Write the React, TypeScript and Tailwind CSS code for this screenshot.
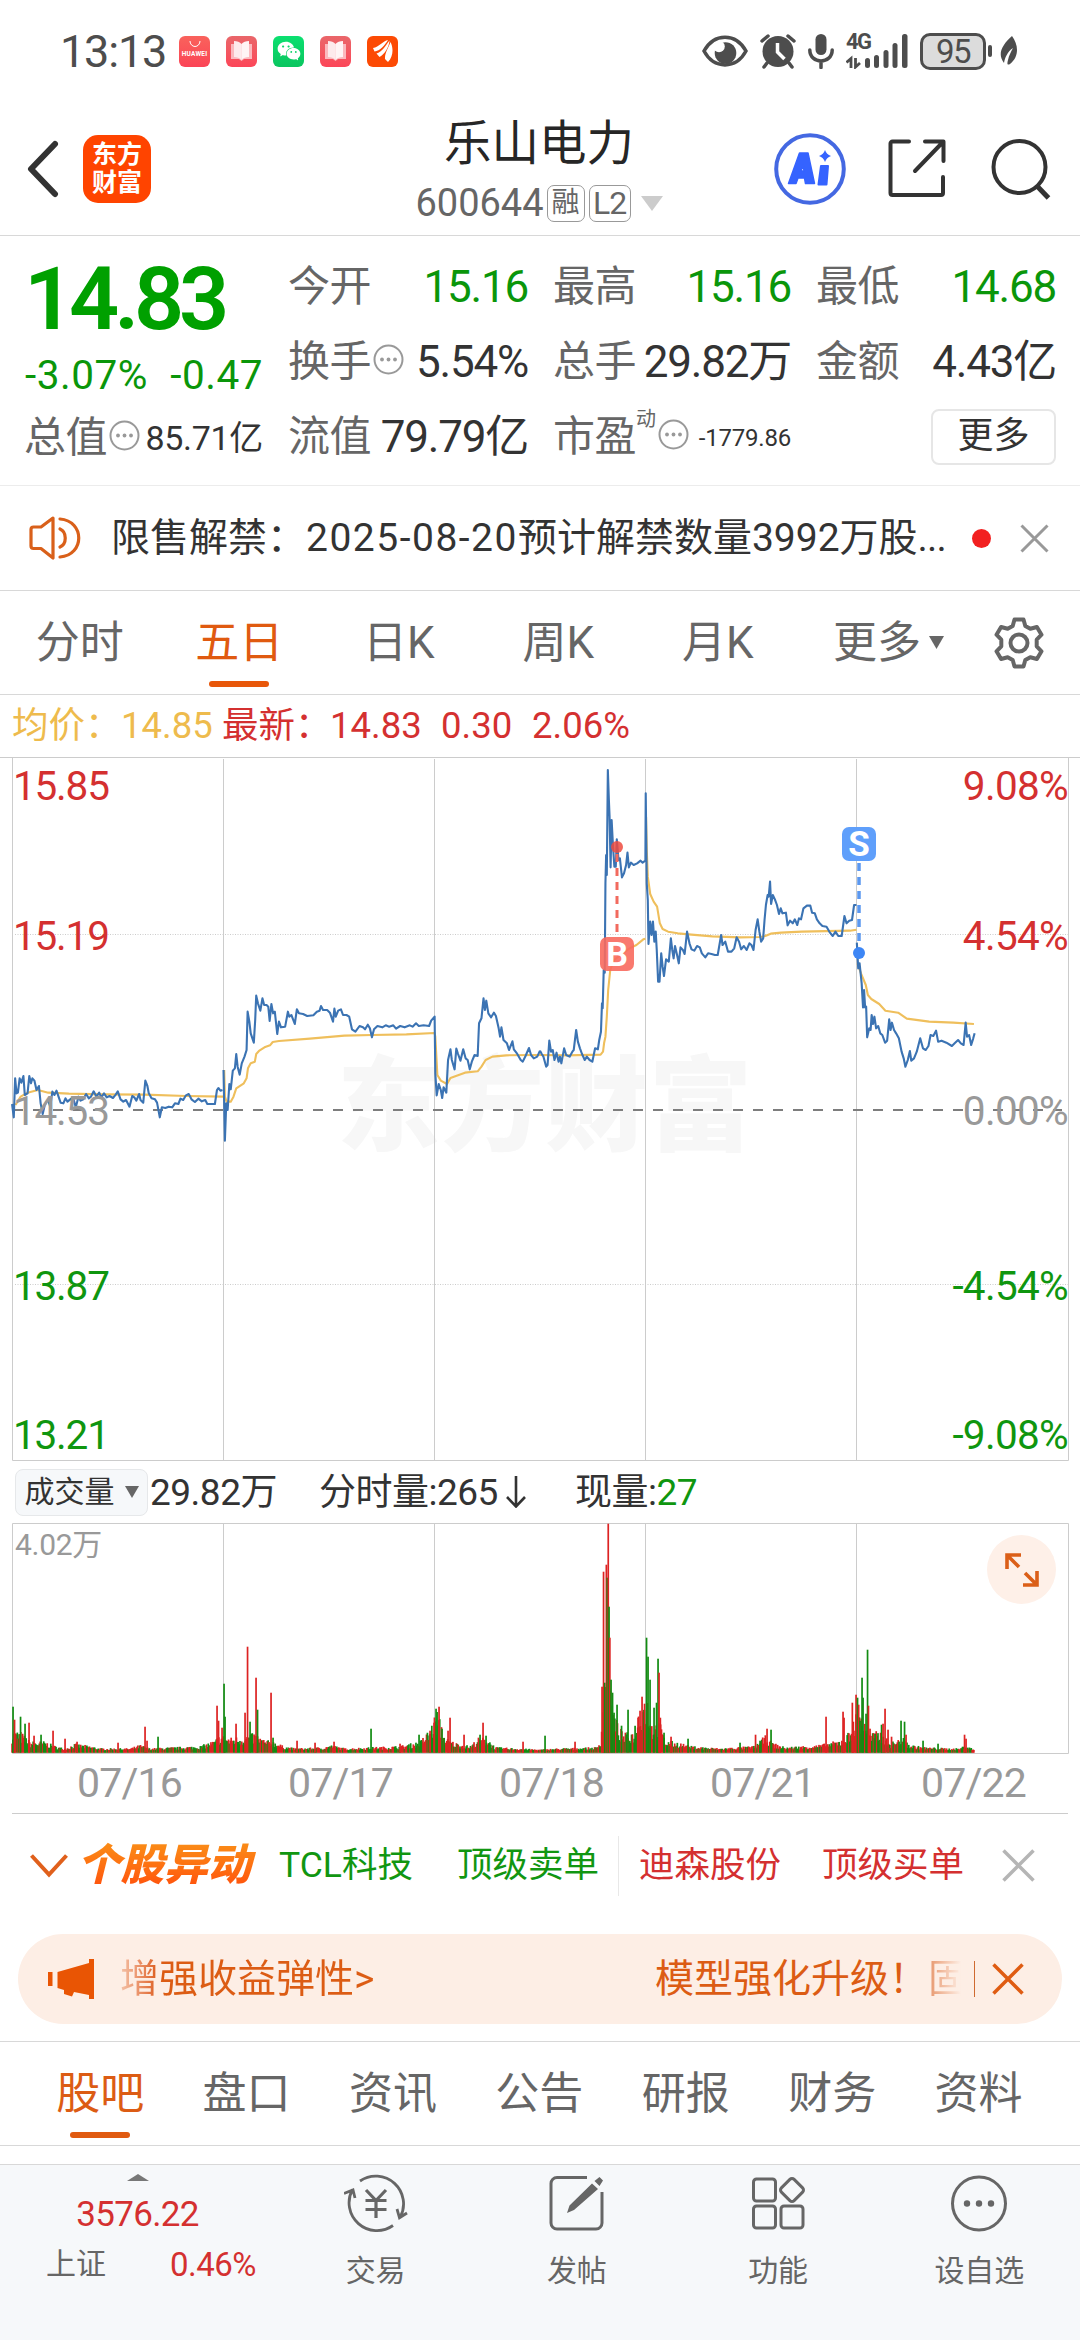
import React from 'react';
import { AiFillWechat } from 'react-icons/ai';
import { clsx } from 'clsx';

/* Chart geometry: both plots share the same five day columns */
const DAY_LINES = [223.5, 434.5, 645.5, 856.5];

// Polylines are stored on a fine grid, in two halves of the plot (left / right 540px)
const PRICE_LEFT = [
  '35,1062 40,1102 44,985 48,1030 52,1028 57,985 62,998 68,978 72,1035 80,1030 85,978 90,1000 94,985 100,992 106,1020 113,1008 118,1060 124,1092 130,1065 135,1055 140,1052 146,1070 152,1025 158,1035 164,1022 170,1040 176,1058 184,1060 190,1045 196,1055 204,1048 212,1042 220,1072 228,1040 234,1052 242,1048 250,1032 258,1045 264,1040 272,1024 280,1040 288,1028 294,1042 302,1030 310,1042 318,1038 328,1044 336,1034 342,1024 350,1048 358,1055 366,1050 376,1070 384,1038 390,1042 396,1052 404,1032 408,1050 416,1058 422,992 428,1008 432,1030 440,1045 450,1048 456,1058 464,1102 470,1072 480,1074 490,1070 500,1072 508,1060 518,1062 524,1046 532,1050 540,1036 548,1032 556,1048 566,1056 576,1046 586,1054 596,1050 602,1062 624,1062 630,1020 634,1014 640,1022 646,1020',
  '649,960 653,1172 657,1060 661,1080 666,1002 670,1018 676,962 682,955 686,912 690,950 696,974 702,940 710,920 716,900 719,785 724,815 728,850 737,878 741,810 744,737 749,760 756,782 762,745 767,765 774,765 779,770 783,813 788,762 793,790 798,785 805,852 810,815 816,832 828,830 836,785 840,800 846,795 856,822 862,778 868,790 880,792 892,798 910,796 920,785 928,782 932,768 938,780 950,780 958,788 967,815 971,776 975,800 982,782 990,778 996,795 1006,795 1014,800 1022,838 1032,845 1044,828 1054,832 1060,838 1068,824 1074,835 1080,862 1086,838 1096,828 1110,832 1120,826 1130,830 1142,826 1150,836 1162,828 1175,832 1190,826 1198,830 1208,820 1216,828 1230,826 1246,828 1252,812 1262,800 1264,970 1268,1036 1274,1002 1280,1020 1284,1044 1288,1012 1296,1028 1301,930 1308,898 1312,930 1320,958 1325,896 1330,912 1337,932 1345,898 1352,925 1358,930 1364,958 1370,935 1378,915 1387,918 1391,820 1398,805 1404,745 1408,780 1412,752 1418,790 1426,802 1434,788 1440,798 1448,835 1452,860 1456,832 1462,870 1472,880 1478,900 1488,874 1492,898 1502,912 1512,930 1518,935 1526,918 1536,894 1542,915 1550,925 1560,920 1568,902',
];
const PRICE_RIGHT = [
  '0,902 5,912 10,920 18,950 22,945 27,872 32,905 37,900 42,930 48,908 54,935 58,920 62,940 70,895 76,915 86,920 94,905 98,900 105,840 110,875 116,895 122,912 130,930 136,920 144,930 152,935 160,895 168,898 172,870 177,845 180,760 182,775 185,660 188,668 190,400 192,315 194,375 197,60 200,150 202,200 205,352 208,210 212,290 216,350 220,350 223,268 228,330 232,325 238,382 244,370 250,345 254,308 258,352 264,338 272,345 282,340 292,332 298,338 306,332 307,130 310,400 313,450 315,582 320,515 324,555 328,515 332,575 336,545 339,600 343,695 347,695 352,610 356,650 360,678 366,628 374,635 380,565 384,600 388,625 392,588 398,615 403,640 408,592 415,600 420,612 427,545 434,580 440,598 448,602 456,588 464,592 470,610 480,622 488,610 498,612 508,615 516,615 526,555 530,585 538,575 546,605 556,605 564,595 571,562 578,575 584,598 592,588 600,600 608,580 614,585 620,600 626,540 632,508 637,545 642,575 648,565 652,510 656,465 661,435 664,440 668,395 671,462 676,435 682,448 688,465 694,492 699,475 704,490 714,488 719,526 726,512 734,520 740,508 747,525 752,505 758,508 765,475 775,467 785,467 790,488 798,490 804,508 812,520 820,528 832,530 842,548 850,558 858,545 866,558 876,558 884,498 890,520 898,512 906,510 912,465 919,465',
  '920,578 924,655 928,640 934,700 938,772 941,720 944,772 947,770 950,862 956,835 960,840 963,795 967,822 971,800 976,835 982,828 988,850 994,855 1002,878 1008,872 1014,808 1018,840 1022,818 1028,840 1034,850 1042,865 1050,905 1056,925 1061,950 1068,930 1074,903 1078,932 1086,925 1094,905 1104,865 1112,895 1120,900 1128,888 1134,855 1142,858 1150,842 1156,875 1166,872 1180,878 1196,888 1204,880 1214,870 1222,880 1230,885 1236,818 1240,860 1246,855 1252,885 1258,865 1262,850',
];
const AVG_LEFT = [
  '45,1065 60,1040 80,1028 110,1020 140,1028 200,1031 300,1033 420,1034 540,1038 648,1040',
  '651,960 653,1040 658,1055 670,1055 678,1040 686,1015 708,1000 716,985 720,955 728,940 740,935 744,912 752,903 768,892 784,886 792,876 810,873 900,866 1000,857 1080,855 1180,853 1262,849 1264,860 1270,975 1280,992 1298,1002 1308,984 1350,968 1387,964 1398,950 1410,930 1430,920 1470,916 1568,915',
];
const AVG_RIGHT = [
  '0,915 80,916 176,914 183,905 186,880 190,860 194,800 198,720 204,660 215,630 240,610 260,595 280,585 300,568 306,566',
  '308,200 310,300 313,380 320,432 330,455 340,470 348,520 356,537 372,545 400,550 440,554 500,559 580,562 640,561 654,558 670,551 700,548 760,545 900,542 919,539',
  '922,640 932,670 946,705 952,735 962,747 985,762 1003,782 1040,788 1065,806 1130,815 1200,818 1260,822',
];

// [x, height] envelope of the ordinary minute volume
const VOLUME_BASE = [
  [12, 18], [20, 18], [30, 9], [45, 9], [55, 5], [65, 3], [75, 7], [90, 5], [100, 3], [130, 3], [140, 6], [150, 3], [200, 5],
  [215, 10], [220, 15], [230, 12], [245, 14], [255, 16], [265, 10], [275, 9], [283, 5], [295, 3], [325, 4], [330, 6], [345, 3],
  [400, 5], [420, 9], [430, 20], [437, 36], [445, 12], [455, 8], [470, 5], [478, 12], [488, 12], [495, 4], [540, 2], [560, 3],
  [597, 4], [601, 12], [604, 60], [610, 70], [613, 35], [620, 20], [625, 16], [633, 18], [640, 40], [647, 50], [652, 25], [660, 25],
  [665, 10], [680, 8], [690, 5], [720, 3], [755, 5], [765, 14], [772, 8], [785, 4], [820, 6], [840, 10], [850, 18], [857, 35],
  [865, 30], [870, 16], [880, 18], [890, 8], [903, 12], [910, 6], [925, 4], [950, 3], [960, 3], [965, 6], [974, 2],
];

// [x, height, rising] single minutes that stand out
const VOLUME_SPIKES = [
  [13, 46, 0], [14.5, 33, 1], [20.5, 36, 0], [25, 29, 0], [29, 30, 1], [34, 17, 1], [41, 18, 0], [53, 22, 1], [65, 14, 1], [77, 11, 1],
  [118, 10, 1], [145, 26, 1], [147, 12, 1], [158, 16, 0], [217, 47, 1], [218.5, 32, 1], [222, 25, 1], [224, 69, 0], [225, 36, 0], [236, 29, 1],
  [245, 40, 1], [247.5, 106, 1], [250, 31, 0], [256, 75, 1], [257.5, 43, 0], [271, 60, 1], [273, 15, 0], [297, 12, 1], [315, 10, 1], [334, 11, 1],
  [371, 24, 0], [400, 9, 1], [419, 18, 0], [430, 22, 1], [434, 30, 1], [436, 44, 0], [439, 46, 1], [442, 24, 0], [448, 22, 1], [450, 35, 1],
  [464, 18, 1], [480, 18, 0], [483, 30, 1], [486, 17, 0], [523, 11, 1], [545, 17, 0], [575, 11, 1], [602, 66, 1], [603.5, 181, 1], [604.7, 70, 0],
  [606.3, 188, 1], [607.2, 175, 0], [608.2, 229, 1], [609, 146, 0], [609.8, 115, 1], [611, 73, 0], [612.5, 60, 0], [614, 40, 0], [617, 48, 0], [621.5, 27, 0],
  [628, 43, 0], [638, 35, 1], [640, 42, 1], [642, 56, 1], [644.5, 49, 1], [646.5, 115, 0], [648, 96, 0], [650, 73, 0], [654, 45, 0], [656.5, 50, 0],
  [658, 94, 0], [659, 80, 1], [660.3, 35, 1], [664, 20, 0], [671, 16, 1], [688, 14, 0], [740, 10, 0], [755.5, 18, 1], [760, 12, 0], [767, 24, 1],
  [771, 23, 0], [826, 36, 1], [843, 41, 1], [844, 35, 1], [852.3, 50, 1], [853.3, 31, 1], [856, 58, 1], [857.5, 55, 0], [858.6, 48, 1], [860, 32, 0],
  [862, 75, 0], [863, 55, 0], [866, 39, 0], [867.5, 103, 0], [868.4, 47, 1], [870, 24, 1], [875, 19, 0], [881.5, 28, 0], [883, 29, 1], [885, 44, 1],
  [888, 23, 1], [891.5, 16, 1], [901, 32, 0], [904.5, 31, 0], [906, 18, 1], [923, 12, 0], [938, 9, 0], [964.5, 18, 1], [966, 14, 1],
];

const buildBars = () => {
  const bars: { x: number; h: number; up: boolean }[] = [];
  let seed = 7;
  const rand = () => {
    seed = (seed * 16807) % 2147483647;
    return seed / 2147483647;
  };
  let k = 0;
  for (let x = 12; x < 974; x += 0.88) {
    while (VOLUME_BASE[k + 1][0] < x) k++;
    const [x0, h0] = VOLUME_BASE[k];
    const [x1, h1] = VOLUME_BASE[k + 1];
    const h = h0 + ((h1 - h0) * (x - x0)) / (x1 - x0);
    bars.push({ x, h: h * (0.45 + rand() * 0.75) + 1, up: rand() > 0.45 });
  }
  VOLUME_SPIKES.forEach(([x, h, up]) => bars.push({ x, h, up: up === 1 }));
  return bars;
};
const BARS = buildBars();

const Lines: React.FC<{ points: string[]; color: string; right?: boolean }> = ({ points, color, right }) => (
  <g transform={`translate(${right ? 540 : 0} -7) scale(0.34439 0.33333)`} fill="none" stroke={color} strokeWidth="2.1" strokeLinejoin="round">
    {points.map((p) => (
      <polyline key={p.slice(0, 12)} points={p} vectorEffect="non-scaling-stroke" />
    ))}
  </g>
);

const Cross: React.FC<{ size: number; color: string; width?: number }> = ({ size, color, width = 4 }) => (
  <svg width={size} height={size} viewBox={`0 0 ${size} ${size}`} stroke={color} strokeWidth={width}>
    <path d={`M1.5 1.5L${size - 1.5} ${size - 1.5}M${size - 1.5} 1.5L1.5 ${size - 1.5}`} />
  </svg>
);

const InfoDot: React.FC = () => (
  <svg width="31" height="31" viewBox="0 0 31 31" className="ml-[2px] shrink-0 -mt-1">
    <circle cx="15.5" cy="15.5" r="14" fill="none" stroke="#999" strokeWidth="2" />
    <g fill="#999">
      <circle cx="9" cy="15.5" r="1.9" />
      <circle cx="15.5" cy="15.5" r="1.9" />
      <circle cx="22" cy="15.5" r="1.9" />
    </g>
  </svg>
);

const BookIcon: React.FC = () => (
  <div className="flex size-[31px] items-center justify-center rounded-[6px] bg-linear-to-b from-[#e9666a] to-[#fc4558]">
    <svg width="21" height="22" viewBox="0 0 21 22">
      <path d="M0 4h21v15H13L10.500 21L8 19H0z" fill="#fbb9be" />
      <path d="M3 1c3 0 6 1 7.500 3v16C9 18 6 17 3 17z" fill="#fdeaec" />
      <path d="M18 1c-3 0-6 1-7.500 3v16C12 18 15 17 18 17z" fill="#fff4f5" />
    </svg>
  </div>
);

const StatusBar: React.FC = () => (
  <div className="flex h-[102px] items-center pl-[60px] text-[#4d4d4d]">
    <span className="w-[119px] text-[45px] leading-none tracking-[-1.2px]">13:13</span>
    <div className="flex gap-4">
      <div className="flex size-[31px] flex-col items-center rounded-[6px] bg-linear-to-b from-[#f9625c] to-[#fb4356] pt-[5px]">
        <svg width="12" height="7" viewBox="0 0 12 7" fill="none" stroke="#fff" strokeWidth="1">
          <path d="M1 0a5 5.500 0 0 0 10 0" />
        </svg>
        <span className="mt-[3px] text-[6.5px] leading-none font-bold tracking-[0.2px] text-white">HUAWEI</span>
      </div>
      <BookIcon />
      <div className="flex size-[31px] items-center justify-center rounded-[6px] bg-linear-to-b from-[#0be070] to-[#0ac55f] text-white">
        <AiFillWechat size={26} />
      </div>
      <BookIcon />
      <div className="flex size-[31px] items-center justify-center rounded-[6px] bg-[#fc4a04]">
        <svg width="20" height="22" viewBox="0 0 20 22" fill="#fff">
          <path d="M0 8C6 7 10 1 15 0C12 5 7 11 1.500 11.500z" />
          <path d="M3.500 13.500C9 12 13 5 16.500 .5C16 7 12 14 6.500 17z" />
          <path d="M12 19C11.500 13 15.500 8 17.500 2C20.500 8 20.500 16 15 22z" />
        </svg>
      </div>
    </div>

    {/* System indicators */}
    <div className="ml-auto flex items-center pr-[62px]">
      <svg width="46" height="32" viewBox="0 0 46 32" fill="none">
        <circle cx="23.500" cy="18" r="10.800" fill="#4d4d4d" />
        <circle cx="17" cy="11.500" r="5.800" fill="#fff" />
        <path d="M2 16C12-2.500 34-2.500 44 16C34 34.500 12 34.500 2 16z" stroke="#4d4d4d" strokeWidth="3.500" />
      </svg>
      <svg width="36" height="36" viewBox="0 0 36 36" className="ml-3">
        <circle cx="18" cy="18.500" r="15.500" fill="#4d4d4d" />
        <path d="M2 8L8 3M34 8L28 3M7 30L4 34M29 30L32 34" stroke="#4d4d4d" strokeWidth="3.500" strokeLinecap="round" />
        <path d="M17.500 10v9l7 7" fill="none" stroke="#fff" strokeWidth="3.500" />
      </svg>
      <svg width="26" height="36" viewBox="0 0 26 36" className="ml-3">
        <rect x="7.500" y="1" width="11" height="21" rx="5.500" fill="#4d4d4d" />
        <path d="M1.800 17c0 14.500 22.400 14.500 22.400 0M13 28v6.500" fill="none" stroke="#4d4d4d" strokeWidth="3.500" strokeLinecap="round" />
      </svg>
      <div className="relative ml-3 h-9 w-[62px]">
        <span className="absolute top-0 left-0 text-[22px] leading-[18px] font-bold tracking-[-1.5px]">4G</span>
        <svg width="62" height="36" viewBox="0 0 62 36" fill="#4d4d4d" className="absolute inset-0">
          <rect x="19" y="25" width="5" height="10" rx="2.500" />
          <rect x="28" y="22" width="5" height="13" rx="2.500" />
          <rect x="37.500" y="17" width="5" height="18" rx="2.500" />
          <rect x="46.500" y="10" width="5" height="25" rx="2.500" />
          <rect x="56" y="1" width="5.500" height="34" rx="2.500" />
          <path d="M.5 29.500L5 25.500v9.500M9.500 25v9L14 30" stroke="#4d4d4d" strokeWidth="2.800" fill="none" />
        </svg>
      </div>
      <div className="ml-3 flex h-[37px] w-[66px] items-center justify-center rounded-[10px] border-3 border-[#4d4d4d] bg-[#dcdcdc] text-[33px] leading-none tracking-[-1.5px]">95</div>
      <div className="ml-[2px] h-3 w-[4px] rounded-full bg-[#4d4d4d]" />
      <svg width="18" height="30" viewBox="0 0 18 30" className="ml-2" fill="#4d4d4d">
        <path d="M12 0c6 8 8 20-2 28c-3 1.500-3-.500-2-4c1-5 3-8 5-12C7 16 5 22 4 27C-3 18 2 9 12 0z" />
      </svg>
    </div>
  </div>
);

const Header: React.FC = () => (
  <div className="flex h-[134px] border-b border-[#d8d8d8]">
    <div className="flex w-[320px] items-center pl-[26px]">
      <svg width="33" height="58" viewBox="0 0 33 58" fill="none" stroke="#333" strokeWidth="6" strokeLinecap="round" strokeLinejoin="round">
        <path d="M29 4L5 29L29 54" />
      </svg>
      <div className="ml-6 flex size-[68px] flex-col items-center justify-center rounded-[15px] bg-[#ff4400] text-[25px] leading-[28px] font-bold text-white">
        <span>东方</span>
        <span>财富</span>
      </div>
    </div>
    <div className="flex flex-1 flex-col items-center pt-3 pr-[2px]">
      <h1 className="text-[47.500px] leading-[60px] text-[#262626]">乐山电力</h1>
      <div className="flex h-[58px] items-center text-[#666]">
        <span className="text-[38px] leading-none">600644</span>
        <span className="ml-[3px] flex h-[37px] w-[38px] items-center justify-center rounded-[7px] border-[1.5px] border-[#999] text-[28px] leading-none">融</span>
        <span className="ml-1 flex h-[37px] w-[42px] items-center justify-center rounded-[7px] border-[1.5px] border-[#999] text-[32px] leading-none tracking-[-1px]">L2</span>
        <svg width="22" height="15" viewBox="0 0 22 15" className="ml-[10px]">
          <path d="M0 0h22L11 15z" fill="#ccc" />
        </svg>
      </div>
    </div>
    <div className="flex w-[320px] items-center justify-end pr-[28px]">
      <svg width="72" height="72" viewBox="0 0 72 72">
        <circle cx="36" cy="36" r="33.800" fill="none" stroke="#4468e2" strokeWidth="4" />
        <path d="M14.500 50.500L25.500 20H34L40.500 50.500H31.500L30.500 45H24L22 50.500zM27 38h3l-.8-6z" fill="#3563ff" stroke="#3563ff" strokeWidth="1.500" strokeLinejoin="round" fillRule="evenodd" />
        <path d="M47 33h7L52.500 51.500h-8z" fill="#3563ff" stroke="#3563ff" strokeWidth="2" strokeLinejoin="round" />
        <path d="M51 17q1.500 4.500 6 6q-4.500 1.500-6 6q-1.500-4.500-6-6q4.500-1.500 6-6z" fill="#3563ff" />
      </svg>
      <svg width="58" height="59" viewBox="0 0 58 59" fill="none" stroke="#333" strokeWidth="4" strokeLinecap="round" strokeLinejoin="round" className="ml-[42px]">
        <path d="M21 2.500H4.500a2 2 0 0 0-2 2V54a2 2 0 0 0 2 2H53a2 2 0 0 0 2-2V38M37 2.500H55.500V22M54 4L27 32" />
      </svg>
      <svg width="62" height="62" viewBox="0 0 62 62" fill="none" stroke="#333" strokeWidth="4" className="ml-[44px]">
        <circle cx="29.500" cy="29" r="26" />
        <path d="M47 48L58.500 60" strokeWidth="5" />
      </svg>
    </div>
  </div>
);

interface StatProps {
  label: string;
  value: string;
  green?: boolean;
  info?: boolean;
}

const Stat: React.FC<StatProps> = ({ label, value, green, info }) => (
  <div className="flex h-[75px] items-center">
    <span className="-ml-px text-[42px] leading-none tracking-[-0.5px] text-[#666]">{label}</span>
    {info && <InfoDot />}
    <span className={clsx('ml-auto text-[44px] leading-none tracking-[-1.2px]', green ? 'text-[#0a960a]' : 'text-[#333]')}>{value}</span>
  </div>
);

const Quote: React.FC = () => (
  <div className="grid h-[250px] grid-cols-[237px_239px_237px_239px] gap-x-[26px] border-b border-[#ececec] pt-[13px] pl-[26px]">
    <div>
      <div className="-ml-[2px] flex h-[98px] items-center pt-[2px] text-[88px] leading-none font-semibold tracking-[-5.2px] text-[#00a000]">14.83</div>
      <div className="flex h-[54px] items-center justify-between pt-[2px] text-[40.500px] leading-none text-[#0a960a]">
        <span className="-ml-px tracking-[0.5px]">-3.07%</span>
        <span className="tracking-[0.5px]">-0.47</span>
      </div>
      <div className="flex h-[73px] items-center">
        <span className="-ml-[2px] text-[42px] leading-none tracking-[-0.5px] text-[#666]">总值</span>
        <InfoDot />
        <span className="ml-auto text-[34px] leading-none tracking-[-0.3px] text-[#333]">85.71亿</span>
      </div>
    </div>
    <div>
      <Stat label="今开" value="15.16" green />
      <Stat label="换手" value="5.54%" info />
      <Stat label="流值" value="79.79亿" />
    </div>
    <div>
      <Stat label="最高" value="15.16" green />
      <Stat label="总手" value="29.82万" />
      <div className="flex h-[75px] items-center">
        <span className="-ml-px text-[42px] leading-none tracking-[-0.5px] text-[#666]">市盈</span>
        <span className="mb-9 text-[20px] leading-none text-[#666]">动</span>
        <InfoDot />
        <span className="ml-auto pt-[2px] text-[24px] leading-none tracking-[-0.2px] text-[#333]">-1779.86</span>
      </div>
    </div>
    <div>
      <Stat label="最低" value="14.68" green />
      <Stat label="金额" value="4.43亿" />
      <div className="flex h-[75px] items-center justify-end">
        <button className="h-[56px] w-[125px] rounded-[8px] border-2 border-[#e6e6e6] pb-[2px] text-[36px] leading-none text-[#333]">更多</button>
      </div>
    </div>
  </div>
);

const Notice: React.FC = () => (
  <div className="flex h-[105px] items-center border-b border-[#d8d8d8] pl-[29px] whitespace-nowrap">
    <svg width="52" height="44" viewBox="0 0 52 44" fill="none" stroke="#d9601a" strokeWidth="3.200" strokeLinejoin="round" strokeLinecap="round">
      <path d="M24 2L12 11H4.500A2.500 2.500 0 0 0 2 13.500V30A2.500 2.500 0 0 0 4.500 32.500H12L24 42z" />
      <path d="M31 13c7 3 7 15 0 18M31 3c25 2 25 36 0 38" />
    </svg>
    <p className="ml-[30px] text-[39px] leading-none text-[#333]">
      限售解禁：<span className="tracking-[1.5px]">2025-08-20</span>预计解禁数量3992万股<span className="tracking-[-0.8px]">...</span>
    </p>
    <div className="ml-[26px] size-[19px] rounded-full bg-[#f22020]" />
    <div className="mr-[31px] ml-auto">
      <Cross size={29} color="#999" width={3} />
    </div>
  </div>
);

const PERIODS = ['分时', '五日', '日K', '周K', '月K'];

const PeriodTabs: React.FC = () => (
  <div className="flex h-[104px] items-center border-b border-[#d8d8d8] text-[44px] leading-none text-[#666]">
    {PERIODS.map((p) => (
      <div key={p} className={clsx('relative flex h-full w-[159.500px] items-center justify-center', p === '五日' && 'text-[#e05a10]')}>
        {p}
        {p === '五日' && <i className="absolute bottom-[7px] h-[6px] w-[60px] rounded-full bg-[#e8570a]" />}
      </div>
    ))}
    <div className="flex w-[182px] items-center justify-center gap-2">
      更多
      <svg width="15" height="13" viewBox="0 0 15 13">
        <path d="M0 0h15L7.500 13z" fill="#666" />
      </svg>
    </div>
    <svg width="52" height="52" viewBox="0 0 52 52" fill="none" stroke="#666" strokeWidth="4" strokeLinejoin="round" className="ml-[13px]">
      <path d="M21.500 2.500h9l1.800 6.500l5 2.800l6.600-1.800l4.600 7.700l-4.800 5v6.600l4.800 5l-4.600 7.700l-6.600-1.800l-5 2.800l-1.800 6.500h-9L19.700 43l-5-2.800L8.100 42l-4.600-7.700l4.800-5v-6.600l-4.800-5L8.100 10l6.600 1.800l5-2.800z" />
      <circle cx="26" cy="26" r="8.500" />
    </svg>
  </div>
);

const Legend: React.FC = () => (
  <div className="flex h-[62px] items-center pl-3 text-[36.500px] leading-none whitespace-nowrap text-[#d43030]">
    <span className="w-[109px] text-[#eebb4d]">均价：</span>
    <span className="w-[101px] text-[#eebb4d]">14.85</span>
    <span className="w-[108px]">最新：</span>
    <span className="w-[111px]">14.83</span>
    <span className="w-[91px]">0.30</span>
    <span>2.06%</span>
  </div>
);

const PRICE_LABELS = [
  { top: 'top-[8px]', color: 'text-[#d43030]', price: '15.85', pct: '9.08%' },
  { top: 'top-[158px]', color: 'text-[#d43030]', price: '15.19', pct: '4.54%' },
  { top: 'top-[333px]', color: 'text-[#999]', price: '14.53', pct: '0.00%' },
  { top: 'top-[508px]', color: 'text-[#0f960f]', price: '13.87', pct: '-4.54%' },
  { top: 'top-[657px]', color: 'text-[#0f960f]', price: '13.21', pct: '-9.08%' },
];

const PriceChart: React.FC = () => (
  <div className="relative h-[704px]">
    <div className="absolute top-[291px] left-[337px] text-[103px] leading-[120px] font-black tracking-[1px] text-[#f7f7f7]">东方财富</div>
    <svg width="1080" height="704" viewBox="0 0 1080 704" className="absolute inset-0">
      <g stroke="#ccc" strokeWidth="1">
        <path d="M0 0.500H1080M12.500 0V703.500H1068.500V0" fill="none" />
        {DAY_LINES.map((x) => (
          <path key={x} d={`M${x} 2V703`} />
        ))}
        <path d="M15 177.500H1068M15 527.500H1068" strokeDasharray="1 1.500" />
      </g>
      <path d="M13 353H1062" stroke="#7d7d7d" strokeWidth="2" strokeDasharray="10 10" />
      <Lines points={AVG_LEFT} color="#efbf5c" />
      <Lines points={AVG_RIGHT} color="#efbf5c" right />
      <Lines points={PRICE_LEFT} color="#3b73b3" />
      <Lines points={PRICE_RIGHT} color="#3b73b3" right />
      <path d="M617 97V180" stroke="#f26a5e" strokeWidth="3" strokeDasharray="8 6" />
      <circle cx="617" cy="90" r="6" fill="#ee4b3e" fillOpacity="0.850" />
      <path d="M859 106V190" stroke="#5b98f0" strokeWidth="3.500" strokeDasharray="8 6" />
      <circle cx="859" cy="196" r="6" fill="#3d86f5" />
    </svg>
    {PRICE_LABELS.map((l) => (
      <div key={l.price} className={clsx('absolute right-[12px] left-[13px] flex justify-between text-[40.500px] leading-[42px]', l.top, l.color)}>
        <span className="tracking-[-1.2px]">{l.price}</span>
        <span className="tracking-[-0.7px]">{l.pct}</span>
      </div>
    ))}
    {/* Buy / sell markers */}
    <div className="absolute top-[180px] left-[600px] flex size-[34px] items-center justify-center rounded-[7px] bg-[#f86a5e]/90 text-[34px] leading-none font-bold text-white">B</div>
    <div className="absolute top-[70px] left-[842px] flex size-[34px] items-center justify-center rounded-[7px] bg-[#5f9ffb] text-[35px] leading-none font-bold text-white">S</div>
  </div>
);

const VolumeHeader: React.FC = () => (
  <div className="flex h-[62px] items-center pl-[15px] text-[37px] leading-none tracking-[-0.5px] whitespace-nowrap text-[#333]">
    <div className="flex h-[47px] w-[133px] items-center justify-center gap-[10px] rounded-[8px] border border-[#e6e8ea] bg-[#f6f8fa] text-[30px] tracking-normal">
      成交量
      <svg width="14" height="12" viewBox="0 0 14 12">
        <path d="M0 0h14L7 12z" fill="#666" />
      </svg>
    </div>
    <span className="ml-[2px] w-[169px]">29.82万</span>
    <span className="flex w-[256px] items-center">
      分时量:265
      <svg width="20" height="32" viewBox="0 0 20 32" fill="none" stroke="#333" strokeWidth="2.600" className="ml-2">
        <path d="M10 0V30M1 21L10 30.500L19 21" />
      </svg>
    </span>
    <span>现量:</span>
    <span className="text-[#0f960f]">27</span>
  </div>
);

const VolumeChart: React.FC = () => (
  <div className="relative h-[231px]">
    <svg width="1080" height="231" viewBox="0 0 1080 231" className="absolute inset-0">
      <g stroke="#ccc" strokeWidth="1" fill="none">
        <path d="M12.500 0.500H1068.500V230.500H12.500z" />
        {DAY_LINES.map((x) => (
          <path key={x} d={`M${x} 0V230`} />
        ))}
      </g>
      {BARS.map((b, i) => (
        <rect key={i} x={b.x - 0.8} y={229.7 - b.h} width="1.700" height={b.h} fill={b.up ? '#dd2222' : '#128c12'} />
      ))}
    </svg>
    <span className="absolute top-[5px] left-[15px] text-[30px] leading-[34px] tracking-[-0.3px] text-[#999]">4.02万</span>
    <div className="absolute top-[12px] left-[987px] flex size-[69px] items-center justify-center rounded-full bg-[#fef0e8]">
      <svg width="34" height="34" viewBox="0 0 34 34" fill="none" stroke="#db5f18" strokeWidth="3.600">
        <path d="M2 16V2H16M3 3L14 14M18 32H32V18M20 20L31 31" />
      </svg>
    </div>
  </div>
);

const DATES = ['07/16', '07/17', '07/18', '07/21', '07/22'];

const Dates: React.FC = () => (
  <div className="mx-3 flex h-[60px] items-center border-b border-[#ccc] pl-[12px] text-[41px] leading-none tracking-[-0.8px] text-[#999]">
    {DATES.map((d) => (
      <span key={d} className="w-[211px] shrink-0 text-center">{d}</span>
    ))}
  </div>
);

const Ticker: React.FC = () => (
  <div className="flex h-[103px] items-center pl-[30px] text-[35.500px] leading-none whitespace-nowrap">
    <svg width="38" height="24" viewBox="0 0 38 24" fill="none" stroke="#e0601c" strokeWidth="4">
      <path d="M1.500 1.500L19 20.500L36.500 1.500" />
    </svg>
    <div className="ml-[9px] w-[202px] bg-linear-to-b from-[#fa8d17] to-[#ff4c0c] bg-clip-text text-[43.500px] leading-[48px] font-black text-transparent italic">个股异动</div>
    <span className="w-[178px] text-[#119611]">TCL科技</span>
    <span className="w-[161px] text-[#119611]">顶级卖单</span>
    <i className="h-[60px] w-px bg-[#e8e8e8]" />
    <span className="ml-5 w-[183px] text-[#d43030]">迪森股份</span>
    <span className="w-[180px] text-[#d43030]">顶级买单</span>
    <Cross size={33} color="#b5b5b5" width={3.500} />
  </div>
);

const PromoBar: React.FC = () => (
  <div className="mx-[18px] my-[17px] flex h-[90px] items-center rounded-full bg-[#fdeee5] pl-[30px] text-[39px] leading-none whitespace-nowrap text-[#dc5c14]">
    <svg width="46" height="40" viewBox="0 0 46 40" fill="#e95504">
      <path d="M0 13h4.500v14H0zM9.500 13L41 4V0h5v40h-5v-4l-15-3l-2 4.500l-8-2.500V31l-6.500-2z" />
    </svg>
    <span className="ml-[26px] bg-linear-to-r from-[#f3c3a9] to-[#dc5c14] to-[15%] bg-clip-text leading-[48px] text-transparent">增强收益弹性&gt;</span>
    <span className="ml-auto">模型强化升级！</span>
    <span className="w-[46px] bg-linear-to-r from-[#e59468] to-[#fdeee5] to-[72%] bg-clip-text leading-[48px] text-transparent">固</span>
    <i className="h-[36px] w-px bg-[#cf6a30]" />
    <div className="mr-[38px] ml-[17px]">
      <Cross size={32} color="#df5c12" width={3.500} />
    </div>
  </div>
);

const SECTIONS = ['股吧', '盘口', '资讯', '公告', '研报', '财务', '资料'];

const SectionTabs: React.FC = () => (
  <div className="flex h-[105px] items-center border-y border-[#d8d8d8] pl-[27px] text-[44px] leading-none text-[#666]">
    {SECTIONS.map((s, i) => (
      <div key={s} className={clsx('relative flex h-full w-[146.400px] items-center justify-center', i === 0 && 'text-[#dc5c14]')}>
        {s}
        {i === 0 && <i className="absolute bottom-[7px] h-[6px] w-[60px] rounded-full bg-[#e05a10]" />}
      </div>
    ))}
  </div>
);

const NAV = [
  {
    label: '交易',
    icon: (
      <>
        <path d="M16 7A27.800 27.800 0 0 1 56 43.500M63 39L55.500 43.800L53 35M49 51.500A27.800 27.800 0 0 1 8.500 15.500M0 19.500L9 16L11 24" strokeWidth="2.800" />
        <path d="M22 16L32 26.500L42 16M21.500 26.500H42.500M21.500 35.500H42.500M32 26.500V44" strokeWidth="3.200" />
      </>
    ),
  },
  {
    label: '发帖',
    icon: (
      <>
        <path d="M42 3.500H12a6 6 0 0 0-6 6V49a6 6 0 0 0 6 6H51a6 6 0 0 0 6-6V18" />
        <path d="M47 9.500L53 15L29 36L22 39L24.500 31.500zM49.500 7L54.500 3L58 6.500L54.500 12z" fill="#666" stroke="none" />
      </>
    ),
  },
  {
    label: '功能',
    icon: (
      <>
        <rect x="7.500" y="5" width="22" height="22" rx="3" />
        <rect x="7.500" y="32" width="22" height="22" rx="3" />
        <rect x="35" y="32" width="22" height="22" rx="3" />
        <rect x="37" y="7" width="18" height="18" rx="3" transform="rotate(45 46 16)" />
      </>
    ),
  },
  {
    label: '设自选',
    icon: (
      <>
        <circle cx="32" cy="29.500" r="26.500" />
        <g fill="#666" stroke="none">
          <circle cx="20" cy="29.500" r="3.200" />
          <circle cx="32" cy="29.500" r="3.200" />
          <circle cx="44" cy="29.500" r="3.200" />
        </g>
      </>
    ),
  },
];

const BottomNav: React.FC = () => (
  <div className="mt-[18px] flex flex-1 border-t border-[#d8d8d8] bg-[#f6f8fa]">
    <div className="flex w-[275px] flex-col items-center pt-[9px] text-[#d43030]">
      <svg width="22" height="7" viewBox="0 0 22 7">
        <path d="M0 7L11 0L22 7z" fill="#777" />
      </svg>
      <span className="mt-[13px] text-[35px] leading-[42px] tracking-[-0.7px]">3576.22</span>
      <div className="mt-[10px] flex h-[36px] items-center pr-[20px] pl-[47px]">
        <span className="w-[124px] text-[30px] leading-none text-[#666]">上证</span>
        <span className="text-[33px] leading-none tracking-[-0.5px]">0.46%</span>
      </div>
    </div>
    {NAV.map((n) => (
      <div key={n.label} className="flex w-[201.300px] flex-col items-center pt-[9px]">
        <svg width="64" height="60" viewBox="0 0 64 60" fill="none" stroke="#666" strokeWidth="3">{n.icon}</svg>
        <span className="mt-[19px] text-[30px] leading-[36px] text-[#666]">{n.label}</span>
      </div>
    ))}
  </div>
);

export default function App() {
  return (
    <div className="flex h-[2340px] w-[1080px] flex-col overflow-hidden bg-white font-[Roboto,'Noto_Sans_CJK_SC',sans-serif]">
      <StatusBar />
      <Header />
      <Quote />
      <Notice />
      <PeriodTabs />
      <Legend />
      <PriceChart />
      <VolumeHeader />
      <VolumeChart />
      <Dates />
      <Ticker />
      <PromoBar />
      <SectionTabs />
      <BottomNav />
    </div>
  );
}
